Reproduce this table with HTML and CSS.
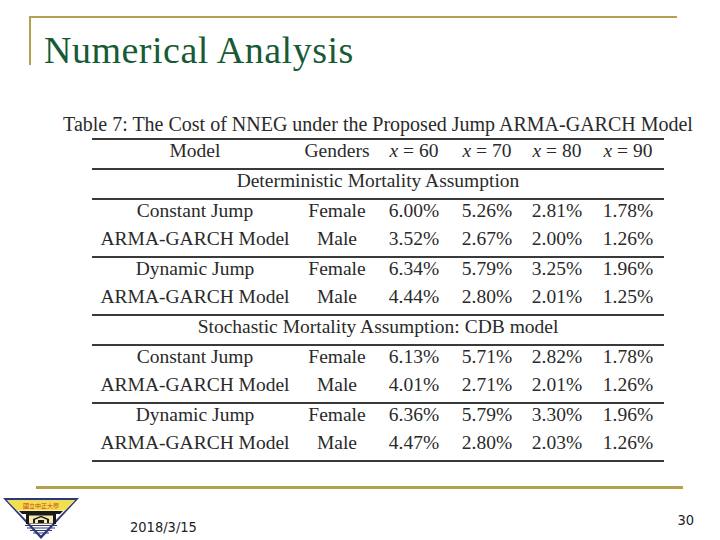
FILE: index.html
```html
<!DOCTYPE html>
<html>
<head>
<meta charset="utf-8">
<link rel="stylesheet" href="styles.css">
</head>
<body>
<div class="slide">
  <header class="title-bar">
    <h1 class="title">Numerical Analysis</h1>
  </header>

  <main class="content">
    <div class="caption">Table 7: The Cost of NNEG under the Proposed Jump ARMA-GARCH Model</div>
    <table class="tbl">
      <colgroup>
        <col class="c1"><col class="c2"><col class="c3"><col class="c4"><col class="c5"><col class="c6">
      </colgroup>
      <tr class="rt">
        <td>Model</td><td>Genders</td>
        <td><i class="mx">x</i> = 60</td><td><i class="mx">x</i> = 70</td><td><i class="mx">x</i> = 80</td><td><i class="mx">x</i> = 90</td>
      </tr>
      <tr class="rt"><td colspan="6">Deterministic Mortality Assumption</td></tr>
      <tr class="rt"><td>Constant Jump</td><td>Female</td><td>6.00%</td><td>5.26%</td><td>2.81%</td><td>1.78%</td></tr>
      <tr><td>ARMA-GARCH Model</td><td>Male</td><td>3.52%</td><td>2.67%</td><td>2.00%</td><td>1.26%</td></tr>
      <tr class="rt"><td>Dynamic Jump</td><td>Female</td><td>6.34%</td><td>5.79%</td><td>3.25%</td><td>1.96%</td></tr>
      <tr><td>ARMA-GARCH Model</td><td>Male</td><td>4.44%</td><td>2.80%</td><td>2.01%</td><td>1.25%</td></tr>
      <tr class="rt"><td colspan="6">Stochastic Mortality Assumption: CDB model</td></tr>
      <tr class="rt"><td>Constant Jump</td><td>Female</td><td>6.13%</td><td>5.71%</td><td>2.82%</td><td>1.78%</td></tr>
      <tr><td>ARMA-GARCH Model</td><td>Male</td><td>4.01%</td><td>2.71%</td><td>2.01%</td><td>1.26%</td></tr>
      <tr class="rt"><td>Dynamic Jump</td><td>Female</td><td>6.36%</td><td>5.79%</td><td>3.30%</td><td>1.96%</td></tr>
      <tr class="rb"><td>ARMA-GARCH Model</td><td>Male</td><td>4.47%</td><td>2.80%</td><td>2.03%</td><td>1.26%</td></tr>
    </table>
  </main>

  <footer class="foot">
    <div class="foot-rule"></div>
    <div class="foot-row">
      <svg class="logo" viewBox="0 0 78 43" width="78" height="43">
        <polygon points="1,1 77,1 39,42" fill="#2e3778"/>
        <polygon points="5,3.2 73,3.2 39,38.5" fill="#ffffff"/>
        <polygon points="5,3.2 73,3.2 63,13.5 15,13.5" fill="#f2df4c"/>
        <text x="39" y="11" text-anchor="middle" class="logo-text">國立中正大學</text>
        <polygon points="17,14 61,14 58,17 20,17" fill="#1a1a1a"/>
        <rect x="24" y="17" width="30" height="10" fill="#1a1a1a"/>
        <rect x="27" y="18.5" width="24" height="8" fill="#f6ecb0"/>
        <polygon points="31,26 31,22 39,18.8 47,22 47,26" fill="#1a1a1a"/>
        <polygon points="33,26 33,22.8 39,20.3 45,22.8 45,26" fill="#f6ecb0"/>
        <rect x="36" y="23" width="6" height="3" fill="#1a1a1a"/>
        <path d="M23 28.5 H55 M25 31 H53 M28 33.5 H50 M31 36 H47" stroke="#2e3778" stroke-width="1.2" fill="none"/>
      </svg>
      <span class="date">2018/3/15</span>
      <span class="page">30</span>
    </div>
  </footer>
</div>
</body>
</html>
```

FILE: styles.css
```css
html, body {
  margin: 0;
  padding: 0;
  background: #ffffff;
}

.slide {
  width: 720px;
  height: 540px;
  display: flex;
  flex-direction: column;
  overflow: hidden;
  background: #ffffff;
}

.title-bar {
  margin: 16px 43px 0 29px;
  height: 47px;
  border-top: 2px solid #b3a150;
  border-left: 2px solid #b3a150;
  padding-left: 13px;
}

.title {
  margin: 0;
  padding-top: 10px;
  font-family: "Liberation Serif", "Times New Roman", serif;
  font-weight: normal;
  font-size: 38px;
  line-height: 44px;
  letter-spacing: 0.5px;
  color: #165a36;
  white-space: nowrap;
}

.content {
  margin: 47px 22px 0 58px;
  display: flex;
  flex-direction: column;
  align-items: center;
}

.caption {
  font-family: "Liberation Serif", "Times New Roman", serif;
  font-size: 20px;
  line-height: 24px;
  color: #2a2a2a;
  white-space: nowrap;
}

.tbl {
  margin-top: 2px;
  width: 572px;
  table-layout: fixed;
  border-collapse: collapse;
  font-family: "Liberation Serif", "Times New Roman", serif;
  font-size: 19.5px;
  color: #2a2a2a;
}

.c1 { width: 206px; }
.c2 { width: 78px; }
.c3 { width: 76px; }
.c4 { width: 70px; }
.c5 { width: 70px; }
.c6 { width: 72px; }

.tbl td {
  padding: 0 0 6px 0;
  line-height: 22px;
  text-align: center;
  white-space: nowrap;
}

.tbl tr.rt td {
  border-top: 2px solid #3a3a3a;
}

.tbl tr.rb td {
  border-bottom: 2px solid #3a3a3a;
}

.mx {
  font-style: italic;
}

.foot {
  margin-top: auto;
  height: 54px;
  display: flex;
  flex-direction: column;
}

.foot-rule {
  height: 3px;
  margin: 0 37px 0 36px;
  background: #b3a150;
}

.foot-row {
  display: flex;
  align-items: flex-start;
  padding: 8px 26px 0 2px;
}

.logo {
  display: block;
  flex: none;
}

.logo-text {
  font-family: "Noto Sans CJK TC", sans-serif;
  font-size: 6px;
  fill: #d2362a;
}

.date {
  margin: 22px 0 0 50px;
  font-family: "DejaVu Sans Condensed", "Liberation Sans", sans-serif;
  font-stretch: condensed;
  font-size: 14.5px;
  line-height: 16px;
  color: #222222;
}

.page {
  margin: 15px 0 0 auto;
  font-family: "DejaVu Sans Condensed", "Liberation Sans", sans-serif;
  font-stretch: condensed;
  font-size: 14.5px;
  line-height: 16px;
  color: #222222;
}
```
